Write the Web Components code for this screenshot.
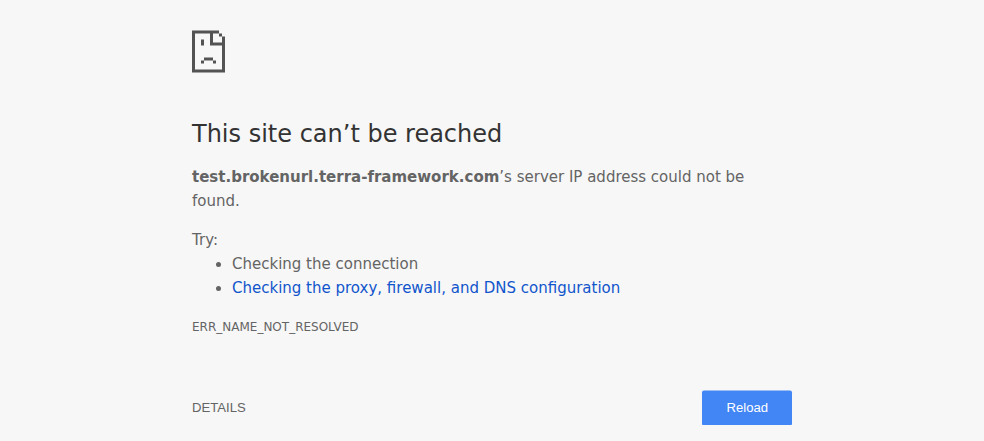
<!DOCTYPE html>
<html lang="en">
<head>
<meta charset="utf-8">
<title>Site unreachable</title>
<style>
html { background: #f7f7f7; }
body { margin: 0; background: #f7f7f7; color: #646464; font-family: "DejaVu Sans", sans-serif; font-size: 15px; line-height: 24px; overflow: hidden; }
</style>
</head>
<body>
<error-page></error-page>
<script>
class SadPage extends HTMLElement {
  constructor() {
    super();
    this.attachShadow({ mode: 'open' }).innerHTML = `
      <style>
        :host { display: block; height: 72px; }
        svg { display: block; }
      </style>
      <svg width="36" height="44" viewBox="0 -0.5 36 44" fill="#535353">
        <path fill-rule="evenodd" d="M0 0H27V3H30V6H33V42H0ZM3 3V39H30V15H18V3ZM21 3V12H30V6H27V3Z"/>
        <path d="M9 9H12V15H9Z"/>
        <path d="M12 27H21V30H12Z"/>
        <path d="M9 30H12V33H9Z"/>
        <path d="M21 30H24V33H21Z"/>
      </svg>`;
  }
}
customElements.define('sad-page', SadPage);

class SuggestionList extends HTMLElement {
  constructor() {
    super();
    this.attachShadow({ mode: 'open' }).innerHTML = `
      <style>
        :host { display: block; margin-top: 15px; }
        p { margin: 0; }
        ul { margin: 0; padding: 0 0 0 40px; }
      </style>
      <p>Try:</p>
      <ul>
        <li>Checking the connection</li>
        <li><slot></slot></li>
      </ul>`;
  }
}
customElements.define('suggestion-list', SuggestionList);

class ActionButton extends HTMLElement {
  constructor() {
    super();
    this.attachShadow({ mode: 'open' }).innerHTML = `
      <style>
        :host { display: block; }
        button { display: block; position: relative; z-index: 0; margin: 0; padding: 0; border: 0; background: none; color: #646464; font: 13.125px/35px "Liberation Sans", Arial, sans-serif; }
        :host([primary]) button { width: 90px; padding-left: 0.6px; box-sizing: border-box; color: #fff; }
        :host([primary]) button::before { content: ""; position: absolute; inset: 0; z-index: -1; background: #4285f4; border-radius: 2px; transform: translateY(0.5px); }
      </style>
      <button><slot></slot></button>`;
  }
}
customElements.define('action-button', ActionButton);

class ErrorPage extends HTMLElement {
  constructor() {
    super();
    this.attachShadow({ mode: 'open' }).innerHTML = `
      <style>
        :host { display: block; width: 600px; margin: 0 auto; padding-top: 30px; }
        h1 { margin: 18px 0 17px; font-size: 24px; line-height: 28px; font-weight: 500; color: #333; }
        p { margin: 0; }
        a { color: #1155cc; text-decoration: none; }
        .code { margin-top: 15px; font-size: 12px; }
        nav { display: flex; justify-content: space-between; margin-top: 51px; }
      </style>
      <sad-page></sad-page>
      <h1>This site can’t be reached</h1>
      <p><strong>test.brokenurl.terra-framework.com</strong>’s server IP address could not be found.</p>
      <suggestion-list><a href="#">Checking the proxy, firewall, and DNS configuration</a></suggestion-list>
      <div class="code">ERR_NAME_NOT_RESOLVED</div>
      <nav>
        <action-button>DETAILS</action-button>
        <action-button primary>Reload</action-button>
      </nav>`;
  }
}
customElements.define('error-page', ErrorPage);
</script>
</body>
</html>
